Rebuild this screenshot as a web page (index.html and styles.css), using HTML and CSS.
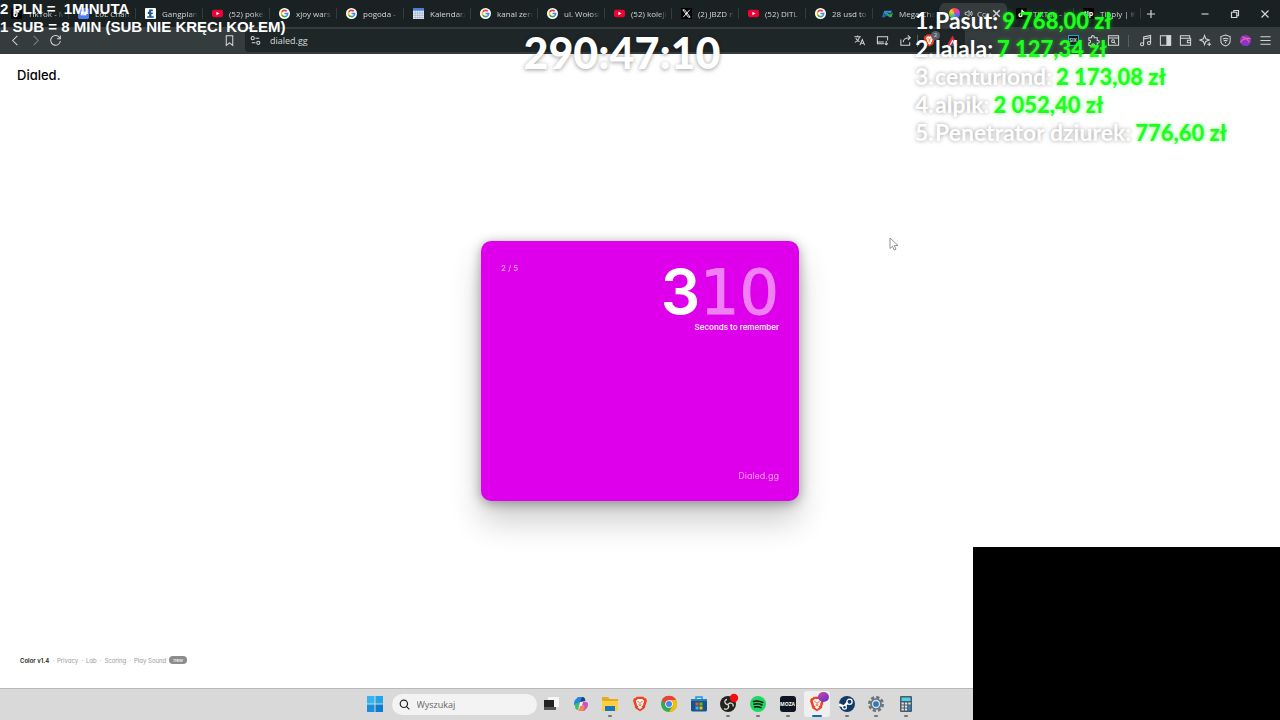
FILE: index.html
```html
<!DOCTYPE html>
<html lang="pl">
<head>
    <meta charset="UTF-8">
    <meta name="viewport" content="width=device-width, initial-scale=1.0">
    <title>Dialed.</title>
    <link rel="stylesheet" href="styles.css">
</head>
<body>
    <svg class="sprite" aria-hidden="true">
        <symbol id="google" viewBox="0 0 24 24">
            <circle cx="12" cy="12" r="12" fill="#fff"/>
            <g fill="none" stroke-width="3.6">
                <path d="M6.2 8.6A6.8 6.8 0 0 1 16.8 7.2" stroke="#ea4335"/>
                <path d="M6.2 15.4a6.8 6.8 0 0 1 0-6.8" stroke="#fbbc05"/>
                <path d="M16.6 17a6.8 6.8 0 0 1-10.4-1.6" stroke="#34a853"/>
                <path d="M12 12h6.8a6.8 6.8 0 0 1-2.2 5" stroke="#4285f4"/>
            </g>
        </symbol>
        <symbol id="youtube" viewBox="0 0 24 24">
            <rect y="4" width="24" height="16" rx="4" fill="#f00033"/>
            <path d="M9.5 8v8l7-4z" fill="#fff"/>
        </symbol>
        <symbol id="tiktok" viewBox="0 0 24 24">
            <rect width="24" height="24" rx="3" fill="#000"/>
            <path d="M13 4v11.5a3.3 3.3 0 1 1-3.3-3.3M13 4c.4 3 2 4.600 5 4.800" fill="none" stroke="#fff" stroke-width="3"/>
        </symbol>
        <symbol id="brave" viewBox="0 0 24 24">
            <path d="M7 1h10l2 2.500 2-.3 1.500 4.300-.8 2-2.700 9L12 23l-7-4.500-2.700-9-.8-2L3 3.200l2 .3z" fill="#f1401d"/>
            <path d="M12 5l3-.8 3.500 3.300-1.800 4.500.3 2-3 1.500 1.500 1.500L12 20l-3.500-3 1.500-1.500L7 14l.3-2-1.800-4.500L9 4.200z" fill="#fff"/>
            <path d="M8 8.500l3 .8M16 8.500l-3 .8M12 9v4.500M10 13l2 1.500 2-1.500" fill="none" stroke="#f1401d" stroke-width="1.300"/>
        </symbol>
    </svg>

    <div class="desktop">
        <header class="browser">
            <div class="tab-strip">
                <div class="tabs">
                    <div class="tab"><svg><use href="#tiktok"/></svg><span>TikTok - Make</span></div>
                    <div class="tab"><svg viewBox="0 0 24 24"><rect width="24" height="24" rx="4" fill="#4c7ff0"/><path d="M6 8h12v8H6z" fill="#fff"/><path d="M9 11h6M9 13.500h4" stroke="#4c7ff0"/></svg><span>LoL Champions</span></div>
                    <div class="tab"><svg viewBox="0 0 24 24"><rect width="24" height="24" rx="2" fill="#fff"/><path d="M9 3h8v4h-4v3h4v3h-3v5h5v3H5v-3h4v-5H6V8h3z" fill="#14589c"/></svg><span>Gangplank</span></div>
                    <div class="tab"><svg><use href="#youtube"/></svg><span>(52) pokemon</span></div>
                    <div class="tab"><svg><use href="#google"/></svg><span>xjoy warszawa</span></div>
                    <div class="tab"><svg><use href="#google"/></svg><span>pogoda - Szukaj</span></div>
                    <div class="tab"><svg viewBox="0 0 24 24"><path d="M0 0h24v24H0z" fill="#e9edf4"/><path d="M0 0h24v6H0z" fill="#4a7fd8"/><path d="M0 11h24M0 16h24M0 21h24M5 6v18M10 6v18M15 6v18M20 6v18" stroke="#9cb0cf" stroke-width="1.500"/></svg><span>Kalendarz</span></div>
                    <div class="tab"><svg><use href="#google"/></svg><span>kanal zero</span></div>
                    <div class="tab"><svg><use href="#google"/></svg><span>ul. Wołoska</span></div>
                    <div class="tab"><svg><use href="#youtube"/></svg><span>(52) kolejka</span></div>
                    <div class="tab"><svg viewBox="0 0 24 24"><path d="M0 0h24v24H0z" fill="#000"/><path d="M4 4h4l12 16h-4zM19 4L5 20" fill="none" stroke="#fff" stroke-width="2"/></svg><span>(2) JBZD na X</span></div>
                    <div class="tab"><svg><use href="#youtube"/></svg><span>(52) DITL vlog</span></div>
                    <div class="tab"><svg><use href="#google"/></svg><span>28 usd to pln</span></div>
                    <div class="tab"><svg viewBox="0 0 24 24"><path d="M0 20l5-14h17l-3 6-7-2z" fill="#2f8be6"/><path d="M5 12l5-3 7 5 7-4-3 10h-4l-7-4-7 5z" fill="#35a853"/><path d="M0 20l5-9 7 4-6 5z" fill="#1763b8"/></svg><span>Mega Challenge</span></div>
                    <div class="tab active">
                        <i class="wheel"></i>
                        <svg class="sound" viewBox="0 0 16 16"><path d="M2 6v4h3l4 3V3L5 6zM11 5.500q2 2.500 0 5M13 3.500q3.500 4.500 0 9" fill="none" stroke="currentColor" stroke-width="1.500"/></svg>
                        <span>Color</span>
                        <button aria-label="Zamknij kartę"><svg viewBox="0 0 10 10"><path d="M2 2l6 6M8 2l-6 6" stroke="currentColor" stroke-width="1.300"/></svg></button>
                    </div>
                    <div class="tab"><svg><use href="#tiktok"/></svg><span>TikTok - Make</span></div>
                    <div class="tab"><b class="tip">tip</b><span>Tipply | Konto</span></div>
                </div>
                <button class="new-tab" aria-label="Nowa karta"><svg viewBox="0 0 12 12"><path d="M6 2.500v7M2.500 6h7" stroke="currentColor"/></svg></button>
                <div class="window-buttons">
                    <button aria-label="Minimalizuj"><svg viewBox="0 0 12 12"><path d="M3 6h6" stroke="currentColor"/></svg></button>
                    <button aria-label="Przywróć"><svg viewBox="0 0 12 12"><path d="M3 4.500h4.500V9H3zM5 4.500V3h4v4.500H7.500" fill="none" stroke="currentColor"/></svg></button>
                    <button aria-label="Zamknij"><svg viewBox="0 0 12 12"><path d="M3 3l6 6M9 3L3 9" stroke="currentColor"/></svg></button>
                </div>
            </div>

            <div class="toolbar">
                <div class="nav">
                    <button aria-label="Wstecz"><svg viewBox="0 0 14 14"><path d="M9 2L4 7l5 5"/></svg></button>
                    <button class="dim" aria-label="Dalej"><svg viewBox="0 0 14 14"><path d="M5 2l5 5-5 5"/></svg></button>
                    <button aria-label="Odśwież"><svg viewBox="0 0 14 14"><path d="M11.500 4.200A5.200 5.200 0 1 0 12.200 7.500M12.200 1.500v3.500H8.700"/></svg></button>
                    <button class="bookmark" aria-label="Zakładka"><svg viewBox="0 0 14 14"><path d="M3.500 1.800h7v10.500L7 9.500l-3.500 2.800z"/></svg></button>
                </div>
                <div class="address">
                    <svg viewBox="0 0 14 14"><circle cx="4" cy="4.500" r="1.700"/><path d="M7 4.500h4M3 9.500h4"/><circle cx="10" cy="9.500" r="1.700"/></svg>
                    <input type="text" value="dialed.gg" aria-label="Adres">
                    <button aria-label="Tłumacz"><svg viewBox="0 0 14 14"><path d="M1.500 3h7M5 1.500V3M7 3c-.5 3-3 5-5 6M3 4.500c1 2 2.500 3 4 4M7.500 12l2.500-6 2.500 6M8.300 10h3.400"/></svg></button>
                    <button aria-label="Zainstaluj"><svg viewBox="0 0 14 14"><path d="M12.500 7V3h-11v7.500h7M1.500 8.500h7M11 7.500v4M9.300 10l1.700 1.700 1.700-1.700"/></svg></button>
                    <button aria-label="Udostępnij"><svg viewBox="0 0 14 14"><path d="M2 6v6h9.500V9M4.500 9c0-3.500 2.500-5 7.500-5M9.500 1.500L12.200 4 9.500 6.500"/></svg></button>
                    <span class="divider"></span>
                    <button class="shield" aria-label="Brave Shields"><svg><use href="#brave"/></svg><span>2</span></button>
                    <button aria-label="Rewards"><svg viewBox="0 0 14 14"><path d="M7 1.500L13 12H1z" fill="#e5283a" stroke="none"/><path d="M7 6l3.300 6H3.700z" fill="#fff" stroke="none"/><path d="M7 8.500L9 12H5z" fill="#7b3fc4" stroke="none"/></svg></button>
                </div>
                <div class="extensions">
                    <button aria-label="SIX"><b class="six">SIX</b></button>
                    <button aria-label="Rozszerzenia"><svg viewBox="0 0 14 14"><path d="M2 4h3c-1-3 3.500-3 2.800 0H11v3c3-.7 3 3.500 0 2.800V12.500H8c.5-2.500-3.300-2.500-2.800 0H2V9.500c2.500.5 2.500-3.300 0-2.800z"/></svg></button>
                    <button aria-label="Szukaj kart"><svg viewBox="0 0 14 14"><path d="M1.500 2h11v10h-11zM1.500 4.300h11"/><circle cx="6.500" cy="7.700" r="1.500"/><path d="M7.700 9l1.500 1.500"/></svg></button>
                    <span class="divider"></span>
                    <button aria-label="Muzyka"><svg viewBox="0 0 14 14"><path d="M5 11V3.200l7.500-1.700v8.200M5 5.500l7.500-1.700"/><circle cx="3.300" cy="11" r="1.700"/><circle cx="10.800" cy="9.800" r="1.700"/></svg></button>
                    <button aria-label="Panel boczny"><svg viewBox="0 0 14 14"><path d="M1.500 2h11v10h-11z"/><path d="M8.500 2h4v10h-4z" fill="currentColor"/></svg></button>
                    <button aria-label="Portfel"><svg viewBox="0 0 14 14"><path d="M11.500 4.500V2h-10v10h11V4.500h-11M12.500 6.800H9v2.700h3.500"/></svg></button>
                    <button aria-label="Leo"><svg viewBox="0 0 14 14"><path d="M6 1.500l1.300 3.700L11 6.500 7.300 8 6 11.500 4.700 8 1 6.500l3.700-1.300zM11 9v4M9 11h4"/></svg></button>
                    <button aria-label="VPN"><svg viewBox="0 0 14 14"><path d="M7 1l5 1.700v4.500C12 10 9.800 12 7 13 4.200 12 2 10 2 7.200V2.700zM4 5.500q3-2 6 0M5 7.500q2-1.300 4 0M7 8.500v1.500"/></svg></button>
                    <button aria-label="Profil"><svg viewBox="0 0 14 14"><circle cx="7" cy="7" r="6" fill="#8a35c9" stroke="none"/><path d="M1.500 9C4 5 7 4 12.500 5M3 3c3 .5 6 2.500 8 6" stroke="#ff5fa2"/></svg></button>
                    <button aria-label="Menu"><svg viewBox="0 0 14 14"><path d="M1.500 3h11M1.500 7h11M1.500 11h11"/></svg></button>
                </div>
            </div>
        </header>

        <main class="page">
            <h1 class="logo">Dialed.</h1>
            <section class="card">
                <div class="card-top">
                    <span class="round">2 / 5</span>
                    <div class="countdown">
                        <div class="count"><span class="now">3</span><span class="rest">10</span></div>
                        <p>Seconds to remember</p>
                    </div>
                </div>
                <span class="card-brand">Dialed.gg</span>
            </section>
            <footer class="site-links">
                <strong>Color v1.4</strong><i>·</i>
                <a href="#">Privacy</a><i>·</i>
                <a href="#">Lab</a><i>·</i>
                <a href="#">Scoring</a><i>·</i>
                <a href="#">Play Sound</a><span class="new">new</span>
            </footer>
        </main>

        <nav class="taskbar">
            <button class="app start" aria-label="Start"><svg viewBox="0 0 16 16"><path d="M0 0h7.500v7.500H0z" fill="#35b5ee"/><path d="M8.500 0H16v7.500H8.500z" fill="#22a4e8"/><path d="M0 8.500h7.500V16H0z" fill="#178fdb"/><path d="M8.500 8.500H16V16H8.500z" fill="#0c7bd0"/></svg></button>
            <label class="search">
                <svg viewBox="0 0 12 12"><circle cx="5.300" cy="5.300" r="4" fill="none" stroke="#222" stroke-width="1.300"/><path d="M8.300 8.300L11.300 11.300" stroke="#222" stroke-width="1.300"/></svg>
                <input type="text" placeholder="Wyszukaj" aria-label="Wyszukaj">
            </label>
            <div class="apps">
                <button class="app" aria-label="Widok zadań"><svg viewBox="0 0 16 16"><path d="M5 1h11v10H5z" fill="#f7f7f7"/><path d="M1 4h10v7H1z" fill="#222"/><path d="M1 11h12v3H1z" fill="#555"/></svg></button>
                <button class="app" aria-label="Copilot"><svg viewBox="0 0 16 16"><path d="M5 1h5l-3 9H3C0 10 1 6 2 4z" fill="#2687dc"/><path d="M9 1c3 0 3 2 3.500 4L7 6z" fill="#24417f"/><path d="M2 8l5-2-2 8c-3 0-3-3-3-6z" fill="#45bb69"/><path d="M9 6h4c3 0 2 4 1 6l-3 3H6z" fill="#ce50c3"/><path d="M5 14l5-5 2 2-2 4H6z" fill="#f58c3d"/><path d="M7 6h3l-1 4H6z" fill="#e7eef5"/></svg></button>
                <button class="app open" aria-label="Eksplorator"><svg viewBox="0 0 16 16"><path d="M0 1h6l1.500 2H16v12H0z" fill="#e9a91d"/><path d="M0 5h16v10H0z" fill="#fdcf45"/><path d="M3 10h10v5H3z" fill="#1878bd"/></svg></button>
                <button class="app" aria-label="Brave"><svg><use href="#brave"/></svg></button>
                <button class="app" aria-label="Chrome"><svg viewBox="0 0 16 16"><circle cx="8" cy="8" r="8" fill="#34a853"/><path d="M1 4a8 8 0 0 1 14 0L8 5 5 9z" fill="#ea4335"/><path d="M15 4a8 8 0 0 1-7 12l3.500-6L9 4z" fill="#fbbc05"/><circle cx="8" cy="8" r="3.800" fill="#fff"/><circle cx="8" cy="8" r="3" fill="#4285f4"/></svg></button>
                <button class="app" aria-label="Microsoft Store"><svg viewBox="0 0 16 16"><path d="M5 4V1h6v3" fill="none" stroke="#1b98d8" stroke-width="1.500"/><path d="M0 3h16v11q0 1.500-2 1.500H2Q0 15.500 0 14z" fill="#17548b"/><path d="M0 3h16v2H0z" fill="#1f85c2"/><path d="M4.500 6.500h3v3h-3z" fill="#f25022"/><path d="M8.500 6.500h3v3h-3z" fill="#7fba00"/><path d="M4.500 10.500h3v3h-3z" fill="#31b8f2"/><path d="M8.500 10.500h3v3h-3z" fill="#ffb900"/></svg></button>
                <button class="app open" aria-label="OBS"><svg viewBox="0 0 16 16"><circle cx="8" cy="8" r="8" fill="#24221f"/><path d="M8 8.500C4 8.500 4 3.500 7 3.500M8 8.500c2-3 6-1 5 2M8 8.500c2 3-1 6-4 4" fill="none" stroke="#d5d5d5" stroke-width="1.300"/><circle cx="14" cy="2" r="4.200" fill="#f20d0d"/></svg></button>
                <button class="app open" aria-label="Spotify"><svg viewBox="0 0 16 16"><circle cx="8" cy="8" r="8" fill="#1ed760"/><path d="M3.500 5.500Q8 4 12.800 6.500M4 8.300Q8 7 12 9M4.500 11q3.500-1 6.500.7" fill="none" stroke="#111" stroke-width="1.500" stroke-linecap="round"/></svg></button>
                <button class="app open" aria-label="Moza"><b class="moza">MOZA</b></button>
                <button class="app open current" aria-label="Brave"><svg><use href="#brave"/></svg><i></i></button>
                <button class="app open" aria-label="Steam"><svg viewBox="0 0 16 16"><circle cx="8" cy="8" r="8" fill="#123a67"/><path d="M0 8.500l5 2.200L9 6" fill="none" stroke="#fff" stroke-width="2.500"/><circle cx="10.500" cy="5.800" r="2.600" fill="#123a67" stroke="#fff" stroke-width="1.300"/><circle cx="5.500" cy="11.300" r="1.900" fill="#123a67" stroke="#fff" stroke-width="1.200"/></svg></button>
                <button class="app open" aria-label="Ustawienia"><svg viewBox="0 0 16 16"><circle cx="8" cy="8" r="6.700" fill="none" stroke="#68737d" stroke-width="2.600" stroke-dasharray="3.200 2.060"/><circle cx="8" cy="8" r="5.800" fill="#68737d"/><circle cx="8" cy="8" r="3.500" fill="#2f78c4" stroke="#dce3e8" stroke-width="1.300"/></svg></button>
                <button class="app open" aria-label="Kalkulator"><svg viewBox="0 0 16 16"><rect x="2" width="12" height="16" rx="1" fill="#4a5965"/><path d="M3.500 1.500h9v3.500h-9z" fill="#4dd0ea"/><path d="M3.500 6.500h2.300v2H3.500zM6.900 6.500h2.300v2H6.900zM10.300 6.500h2.300v2h-2.300zM3.500 9.500h2.300v2H3.500zM6.900 9.500h2.300v2H6.900zM3.500 12.500h2.300v2H3.500zM6.900 12.500h2.300v2H6.900z" fill="#dfe6ea"/><path d="M10.300 9.500h2.300v5h-2.300z" fill="#2387d0"/></svg></button>
            </div>
        </nav>
    </div>

    <!-- stream overlays -->
    <div class="rates">
        <p>2 PLN = &nbsp;1MINUTA</p>
        <p>1 SUB = 8 MIN (SUB NIE KRĘCI KOŁEM)</p>
    </div>
    <div class="timer">290:47:10</div>
    <ol class="donors">
        <li><i>1.</i><span>Pasut:</span><b>9 768,00 zł</b></li>
        <li><i>2.</i><span>lalala:</span><b>7 127,34 zł</b></li>
        <li><i>3.</i><span>centuriond:</span><b>2 173,08 zł</b></li>
        <li><i>4.</i><span>alpik:</span><b>2 052,40 zł</b></li>
        <li><i>5.</i><span>Penetrator dziurek:</span><b>776,60 zł</b></li>
    </ol>
    <div class="camera"></div>
    <svg class="cursor" viewBox="0 0 10 14"><path d="M1 1v10.500l2.500-2.300L5.200 13l1.800-.8-1.700-3.700H9z" fill="#fff" stroke="#777" stroke-width=".8"/></svg>
</body>
</html>
```

FILE: styles.css
```css
* {
    box-sizing: border-box;
}
body {
    margin: 0;
    font-family: "Open Sans", sans-serif;
    background: #fff;
    overflow: hidden;
}
p, h1, ol {
    margin: 0;
    padding: 0;
}
button {
    display: flex;
    align-items: center;
    justify-content: center;
    padding: 0;
    border: none;
    background: none;
    color: inherit;
    font: inherit;
}
input {
    min-width: 0;
    flex: 1;
    padding: 0;
    border: none;
    outline: none;
    background: none;
    color: inherit;
    font: inherit;
}
.sprite {
    display: none;
}
.desktop {
    display: flex;
    flex-direction: column;
    height: 100vh;
}

/* browser */
.browser {
    color: #d3d7d8;
    background: #353c3d;
}
.tab-strip {
    display: flex;
    height: 27px;
    background: #1a2123;
}
.tabs {
    display: flex;
    padding-left: 2px;
}
.tab {
    display: flex;
    align-items: center;
    gap: 6px;
    width: 67px;
    padding: 0 5px 0 9px;
    font-size: 8px;
    position: relative;
}
.tab::after {
    content: "";
    position: absolute;
    right: 0;
    top: 8px;
    height: 11px;
    border-right: 1px solid #353c3d;
}
.tab svg {
    flex: none;
    width: 11px;
    height: 11px;
}
.tab span {
    flex: 1;
    overflow: hidden;
    white-space: nowrap;
    mask-image: linear-gradient(to right, #000 75%, transparent);
}
.tab.active {
    gap: 4px;
    height: 24px;
    margin-top: 3px;
    padding-bottom: 3px;
    border-radius: 5px 5px 0 0;
    background: #353c3d;
}
.tab.active::after {
    display: none;
}
.wheel {
    flex: none;
    width: 11px;
    height: 11px;
    border-radius: 50%;
    background: conic-gradient(#ff4b4b, #e040d0, #5a62ff, #2dc8e8, #5bdc55, #f7d235, #ff4b4b);
}
.tab .sound {
    width: 9px;
}
.tip {
    flex: none;
    width: 11px;
    background: #000;
    color: #fff;
    font-size: 7px;
    line-height: 11px;
    text-align: center;
}
.new-tab, .window-buttons button {
    width: 30px;
}
.new-tab svg, .window-buttons svg {
    width: 14px;
    height: 14px;
}
.new-tab {
    width: 20px;
}
.window-buttons {
    display: flex;
    margin-left: auto;
}
.toolbar {
    display: flex;
    align-items: center;
    height: 27px;
}
.toolbar button {
    width: 20px;
    height: 22px;
}
.toolbar svg {
    flex: none;
    width: 13px;
    height: 13px;
    fill: none;
    stroke: currentColor;
    stroke-width: 1.1;
}
.nav {
    display: flex;
    width: 245px;
    padding: 0 6px 0 5px;
}
.nav .dim {
    color: #7d8485;
}
.nav .bookmark {
    margin-left: auto;
}
.address {
    display: flex;
    flex: 1;
    align-items: center;
    height: 23px;
    padding: 0 1px 0 4px;
    border-radius: 4px;
    background: #1f2628;
    font-size: 9px;
}
.address input {
    margin-left: 8px;
}
.address button {
    width: 23px;
}
.divider {
    width: 1px;
    height: 12px;
    background: #596061;
}
.shield {
    position: relative;
}
.shield span {
    position: absolute;
    left: 13px;
    top: 1px;
    width: 9px;
    border-radius: 50%;
    background: #5b5f6d;
    font-size: 6px;
    line-height: 9px;
}
.shield svg {
    stroke: none;
}
.extensions {
    display: flex;
    align-items: center;
    justify-content: flex-end;
    width: 315px;
    padding-right: 5px;
}
.extensions .divider {
    margin: 0 6px 0 5px;
}
.six {
    width: 11px;
    border: 1px solid #17a7d8;
    background: #07161d;
    font-size: 5px;
    line-height: 9px;
}

/* dialed.gg */
.page {
    display: flex;
    flex: 1;
    flex-direction: column;
    justify-content: space-between;
    align-items: center;
    font-family: Inter, sans-serif;
    font-feature-settings: "cv11";
}
.logo {
    align-self: flex-start;
    height: 42px;
    padding: 12px 17px;
    font-size: 13px;
    line-height: 18px;
    font-weight: 500;
    color: #000;
}
.card {
    display: flex;
    flex-direction: column;
    justify-content: space-between;
    width: 318px;
    height: 260px;
    padding: 20px;
    border-radius: 10px;
    background: #df00eb;
    color: #fff;
    box-shadow: 0 2px 12px rgba(0, 0, 0, .35), 0 20px 32px rgba(0, 0, 0, .2);
}
.card-top {
    display: flex;
    justify-content: space-between;
}
.round {
    padding-top: 1px;
    font-size: 8px;
    line-height: 12px;
    opacity: .7;
}
.countdown {
    text-align: right;
    font-size: 8px;
    line-height: 8px;
    font-weight: 500;
}
.count {
    font-size: 62px;
    line-height: 61px;
}
.now {
    font-weight: 600;
}
.rest {
    font-family: "DejaVu Sans", sans-serif;
    font-weight: 400;
    -webkit-text-stroke: 1px #fff;
    opacity: .5;
}
.card-brand {
    align-self: flex-end;
    font-size: 9px;
    line-height: 10px;
    opacity: .6;
}
.site-links {
    display: flex;
    align-self: flex-start;
    align-items: center;
    gap: 3px;
    height: 42px;
    padding: 0 20px 14px;
    font-size: 6px;
    color: #999;
}
.site-links a {
    color: inherit;
    text-decoration: none;
}
.site-links strong {
    color: #222;
    font-weight: 600;
}
.new {
    padding: 0 4px;
    border-radius: 4px;
    background: #8c8c8c;
    color: #fff;
    font-size: 5px;
    line-height: 8px;
}

/* taskbar */
.taskbar {
    display: flex;
    align-items: center;
    justify-content: center;
    height: 32px;
    padding-bottom: 1px;
    border-top: 1px solid #b8b8b8;
    background: #d9d9d9;
}
.app {
    position: relative;
    height: 26px;
}
.app svg {
    width: 16px;
    height: 16px;
    overflow: visible;
}
.app.start {
    width: 30px;
}
.search {
    display: flex;
    align-items: center;
    gap: 7px;
    width: 145px;
    height: 21px;
    margin-left: 2px;
    padding: 0 7px;
    border-radius: 11px;
    background: #f3f3f3;
    font-size: 9px;
    color: #555;
}
.search svg {
    width: 11px;
    height: 11px;
}
.search input::placeholder {
    color: #666;
}
.apps {
    display: grid;
    grid-template-columns: repeat(13, 1fr);
    width: 384px;
}
.open::after {
    content: "";
    position: absolute;
    bottom: 0;
    width: 4px;
    height: 2px;
    border-radius: 1px;
    background: #777;
}
.current {
    margin: 0 2px;
    border-radius: 3px;
    background: #efefef;
}
.current::after {
    width: 10px;
    background: #0f6cbd;
}
.current i {
    position: absolute;
    right: 1px;
    top: 1px;
    width: 11px;
    height: 10px;
    border-radius: 50%;
    background: linear-gradient(150deg, #c34aa8, #6c2cc4);
}
.moza {
    width: 16px;
    border-radius: 3px;
    background: #0e1420;
    color: #fff;
    font-size: 5px;
    line-height: 16px;
}

/* overlays */
.rates {
    position: absolute;
    left: 0;
    top: 0;
    font: bold 15px/18px "Liberation Sans", sans-serif;
    color: #fff;
}
.timer {
    position: absolute;
    top: 26px;
    left: 50%;
    transform: translateX(-50%);
    margin-left: -18px;
    font: 900 43px/54px Lato, sans-serif;
    color: #fff;
    text-shadow: 0 1px 4px rgba(0, 0, 0, .4);
}
.donors {
    position: absolute;
    left: 915px;
    top: 6px;
    list-style: none;
    font: 700 23px/28px Lato, sans-serif;
    color: #fff;
    text-shadow: 0 0 4px rgba(0, 0, 0, .4);
    white-space: nowrap;
}
.donors li {
    display: flex;
    align-items: baseline;
    height: 28px;
}
.donors i {
    width: 20px;
    font-style: normal;
}
.donors b {
    margin-left: 4px;
    color: #1cff1c;
    font-size: 22px;
    font-weight: 900;
    text-shadow: 0 0 4px rgba(28, 255, 28, .5);
}
.camera {
    position: absolute;
    right: 0;
    bottom: 0;
    width: 24%;
    height: 24%;
    background: #000;
}
.cursor {
    position: absolute;
    left: 889px;
    top: 237px;
    width: 10px;
    height: 14px;
}
```
